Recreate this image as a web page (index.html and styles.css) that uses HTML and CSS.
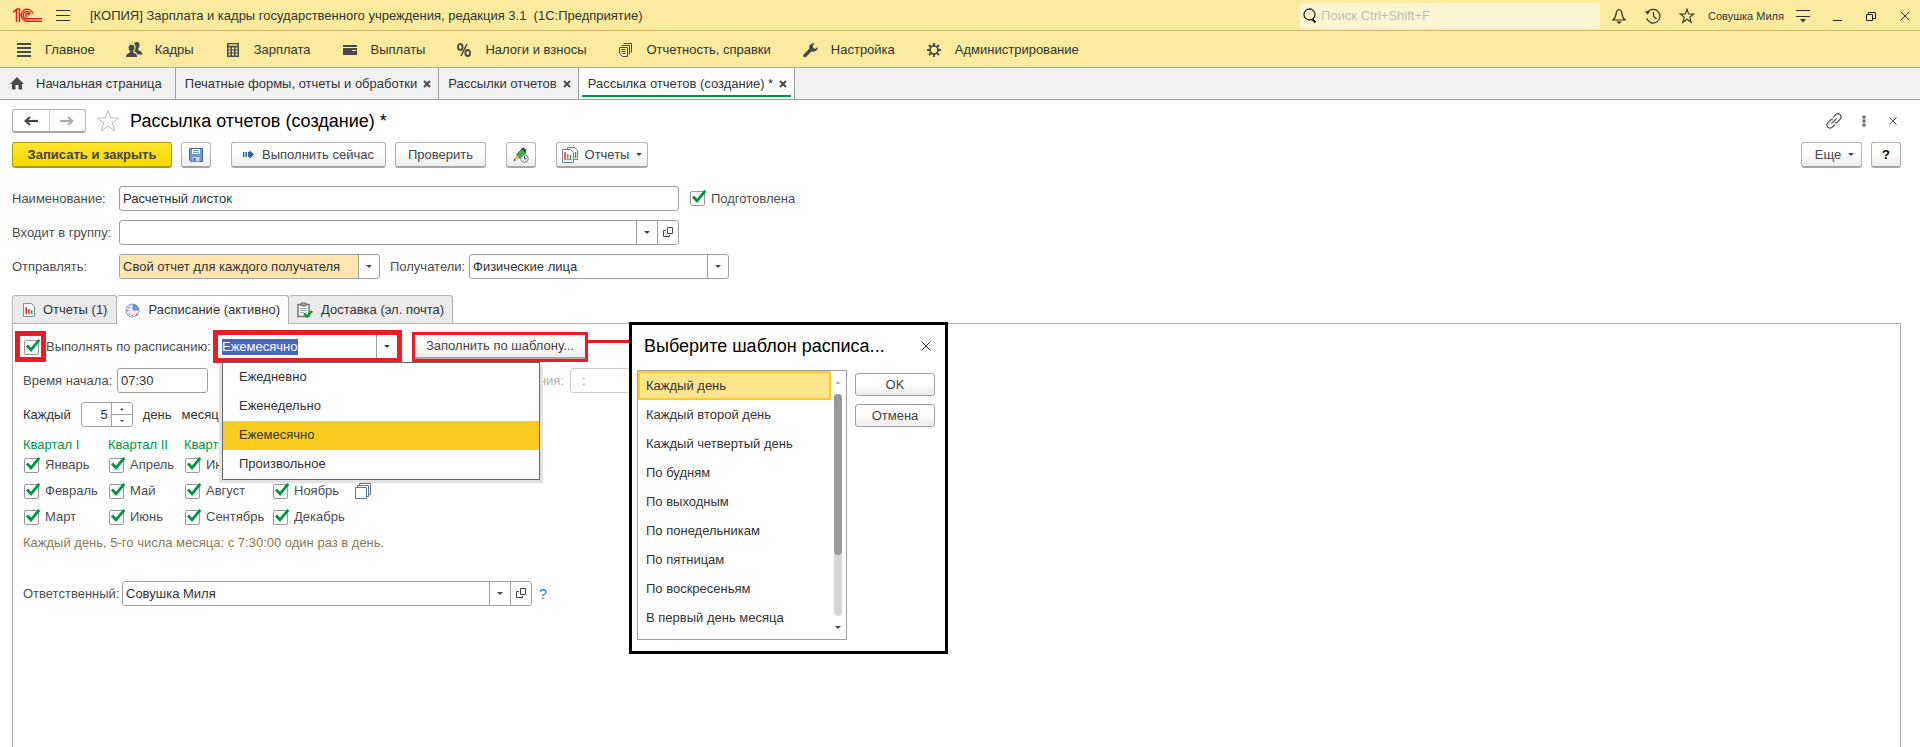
FILE: index.html
```html
<!DOCTYPE html>
<html lang="ru">
<head>
<meta charset="utf-8">
<title>Рассылка отчетов (создание)</title>
<link rel="stylesheet" href="styles.css">
</head>
<body>
<svg class="sprite" width="0" height="0" aria-hidden="true">
  <symbol id="open" viewBox="0 0 11 11"><path d="M4.5 .5h5v6h-5zM3 3.500H.5v6h6V8" fill="none" stroke="#444"/></symbol>
  <symbol id="cross" viewBox="0 0 10 10"><path d="M.5.5l9 9M9.500.5l-9 9" fill="none" stroke="#333"/></symbol>
  <symbol id="xbold" viewBox="0 0 8 8"><path d="M1 1l6 6M7 1L1 7" fill="none" stroke="#4a4a4a" stroke-width="2"/></symbol>
</svg>

<header class="titlebar">
  <svg class="logo" width="30" height="15" viewBox="0 0 30 15" fill="none" stroke="#e02020" stroke-width="1.500"><path d="M0 4.300L3.500 1.500V14M3.200 1h3.200V14"/><path d="M20 5.500A6 6 0 1 0 14.500 13.200H29"/><path d="M17.300 6.500A3.600 3.600 0 1 0 14 10.800H29"/><path d="M15.600 7a1.500 1.500 0 1 0-1.300 1.400"/></svg>
  <button class="ico" aria-label="Меню"><svg width="14" height="12" viewBox="0 0 14 12"><path d="M0 .5h14M0 5.500h14M0 10.500h14" stroke="#333"/></svg></button>
  <h1>[КОПИЯ] Зарплата и кадры государственного учреждения, редакция 3.1&nbsp; (1С:Предприятие)</h1>
  <div class="search">
    <svg width="14" height="16" viewBox="0 0 14 16" fill="none" stroke="#222"><circle cx="6.500" cy="6.500" r="5.500" stroke-width="1.300"/><path d="M9.500 11.500l3 3" stroke-width="2.200"/></svg>
    <input type="search" placeholder="Поиск Ctrl+Shift+F" aria-label="Поиск">
  </div>
  <div class="system">
    <button class="ico" aria-label="Уведомления"><svg width="14" height="16" viewBox="0 0 14 16"><path d="M7 1.500c-2 .6-2.900 2-3 4.500-.1 3-1 4.500-3.200 6h12.400C11 10.500 10.100 9 10 6c-.1-2.500-1-3.900-3-4.500z" fill="none" stroke="#333" stroke-width="1.200"/><path d="M4.500 13.500h5L7.800 15.500H6.200z" fill="#333"/></svg></button>
    <button class="ico" aria-label="История"><svg width="16" height="16" viewBox="0 0 16 16"><path d="M2.500 4.500a6.800 6.800 0 1 1-.8 5.800M8.500 4v4.300l3 2.700" fill="none" stroke="#333" stroke-width="1.200"/><path d="M0 3l5 .2L2.500 6.800z" fill="#333"/></svg></button>
    <button class="ico" aria-label="Избранное"><svg width="16" height="16" viewBox="0 0 16 16"><path d="M8 1.200l1.700 4.700 5 .1-4 3.100 1.500 5.200L8 11.200l-4.200 3.100 1.500-5.200-4-3.100 5-.1z" fill="none" stroke="#333" stroke-width="1.100"/></svg></button>
    <span class="user">Совушка Миля</span>
    <button class="ico" aria-label="Настройки панели"><svg width="14" height="14" viewBox="0 0 14 14"><path d="M0 1.500h14M0 7.500h14" stroke="#333"/><path d="M4 10h6l-3 3.500z" fill="#333"/></svg></button>
    <button class="ico" aria-label="Свернуть"><svg width="10" height="10" viewBox="0 0 10 10"><path d="M1 9.500h9" stroke="#222"/></svg></button>
    <button class="ico" aria-label="Восстановить"><svg width="10" height="10" viewBox="0 0 10 10"><path d="M.5 3.500h6v6h-6zM2.500 3.500v-2h7v6h-3" fill="none" stroke="#222"/></svg></button>
    <button class="ico" aria-label="Закрыть"><svg width="10" height="10"><use href="#cross"/></svg></button>
  </div>
</header>

<nav class="sections">
  <a href="#"><svg width="20" height="16" viewBox="0 0 20 16"><path d="M3 2h14M3 6h14M3 10h14M3 14h14" stroke="#4a4a4a" stroke-width="2"/></svg>Главное</a>
  <a href="#"><svg width="20" height="16" viewBox="0 0 20 16" fill="#4a4a4a"><path d="M12.500 0a3 3 0 0 1 3 3.300c0 1.500-.6 2.500-1.300 3.200v1.500c1.500.9 4.200 1.300 4.200 4.500h-5c-.4-1.700-2-2.500-3-3l.3-1c1.300-2 1.300-5-.6-6.700.4-1.100 1.300-1.800 2.400-1.800z"/><path d="M7.500 2.500c1.900 0 3 1.400 3 3.300 0 1.500-.7 2.700-1.400 3.300v1.300c1.800.8 4 1.500 4 4.600H2c0-3.100 2.200-3.800 4-4.600V9.100c-.8-.6-1.400-1.800-1.400-3.300 0-1.900 1.100-3.300 2.900-3.300z"/></svg>Кадры</a>
  <a href="#"><svg width="20" height="16" viewBox="0 0 20 16"><path d="M4 1h12v14H4z" fill="#4a4a4a"/><path d="M5.500 6.500h9M5.500 9.500h9M5.500 12.500h9" stroke="#fbeb9e" stroke-width="2" stroke-dasharray="2 1.500"/><path d="M5.500 3h9" stroke="#fbeb9e" stroke-width="1.500"/></svg>Зарплата</a>
  <a href="#"><svg width="20" height="16" viewBox="0 0 20 16"><path d="M3 3h14v10H3z" fill="#4a4a4a"/><path d="M3 5.500h14" stroke="#fbeb9e"/><path d="M12 8.500h4" stroke="#fbeb9e"/></svg>Выплаты</a>
  <a href="#"><svg width="20" height="16" viewBox="0 0 20 16" fill="none" stroke="#4a4a4a"><ellipse cx="6.300" cy="5" rx="2.300" ry="3" stroke-width="1.900"/><ellipse cx="13.700" cy="11" rx="2.300" ry="3" stroke-width="1.900"/><path d="M13 2L7 14" stroke-width="1.500"/></svg>Налоги и взносы</a>
  <a href="#"><svg width="20" height="16" viewBox="0 0 20 16" fill="none" stroke="#4a4a4a"><path d="M3.500 5.500h8v9h-5l-3-3zM5.500 3.500h8v9M7.500 1.500h8v9M5.500 7.500h4M5.500 9.500h4M6.500 11.500h3"/></svg>Отчетность, справки</a>
  <a href="#"><svg width="20" height="16" viewBox="0 0 20 16"><path d="M5 13.500l6-6" stroke="#4a4a4a" stroke-width="3.600" stroke-linecap="round"/><path d="M14.500 1.300a4.300 4.300 0 1 0 3.200 3.700l-2.700 2-2.200-1.500.2-2.300z" fill="#4a4a4a"/></svg>Настройка</a>
  <a href="#"><svg width="20" height="16" viewBox="0 0 20 16" fill="none" stroke="#4a4a4a"><circle cx="10" cy="8" r="4" stroke-width="1.700"/><path d="M10 1v3M10 12v3M3 8h3M14 8h3M5 3l2.200 2.200M12.800 10.800L15 13M5 13l2.200-2.200M12.800 5.200L15 3" stroke-width="2"/></svg>Администрирование</a>
</nav>

<nav class="windows">
  <a href="#" class="home"><svg width="14" height="13" viewBox="0 0 14 13"><path d="M7 0l7 7h-2v5.500H8.500V8h-3v4.500H2V7H0z" fill="#4a4a4a"/></svg>Начальная страница</a>
  <a href="#">Печатные формы, отчеты и обработки<svg width="8" height="8"><use href="#xbold"/></svg></a>
  <a href="#">Рассылки отчетов<svg width="8" height="8"><use href="#xbold"/></svg></a>
  <a href="#" class="current">Рассылка отчетов (создание) *<svg width="8" height="8"><use href="#xbold"/></svg></a>
</nav>

<main>
  <div class="heading">
    <div class="history">
      <button aria-label="Назад"><svg width="14" height="10" viewBox="0 0 14 10"><path d="M2 5h12" stroke="#444" stroke-width="2.200"/><path d="M6 1L1.500 5 6 9" fill="none" stroke="#444" stroke-width="2"/></svg></button>
      <button aria-label="Вперед"><svg width="14" height="10" viewBox="0 0 14 10"><path d="M0 5h12" stroke="#aaa" stroke-width="2.200"/><path d="M8 1l4.500 4L8 9" fill="none" stroke="#aaa" stroke-width="2"/></svg></button>
    </div>
    <button class="ico star" aria-label="В избранное"><svg width="24" height="24" viewBox="0 0 24 24"><path d="M12 1.500l2.600 7.500 8 .1-6.300 4.800 2.300 7.800L12 17.200l-6.600 4.500 2.300-7.800L1.400 9.100l8-.1z" fill="none" stroke="#b4bcc4"/></svg></button>
    <h2>Рассылка отчетов (создание) *</h2>
    <div class="tools">
      <button class="ico" aria-label="Ссылка"><svg width="16" height="16" viewBox="0 0 16 16" fill="none" stroke="#555" stroke-width="1.200"><path d="M7 4.500l2.600-2.700a3 3 0 0 1 4.500 4.300L11.500 9a3 3 0 0 1-2.500.8M9 11.500l-2.600 2.700a3 3 0 0 1-4.500-4.300L4.500 7A3 3 0 0 1 7 6.200M5.500 10.500l5-5"/></svg></button>
      <button class="ico" aria-label="Действия"><svg width="4" height="12" viewBox="0 0 4 12"><path d="M.5.5h3v3h-3zM.5 4.500h3v3h-3zM.5 8.500h3v3h-3z" fill="#666"/></svg></button>
      <button class="ico" aria-label="Закрыть форму"><svg width="8" height="8"><use href="#cross"/></svg></button>
    </div>
  </div>

  <div class="toolbar">
    <button class="btn primary">Записать и закрыть</button>
    <button class="btn square" aria-label="Записать"><svg width="14" height="14" viewBox="0 0 14 14"><path d="M.5.5h13v13H2l-1.500-1.500z" fill="#6b9cc9" stroke="#3d6a94"/><path d="M3 1h8v5H3z" fill="#fff"/><path d="M4 2.500h6M4 4.500h6" stroke="#7ea5c8"/><path d="M3.500 9h7v4.500h-7z" fill="#c9d6df"/><path d="M4.500 10h2v3h-2z" fill="#3d6a94"/></svg></button>
    <button class="btn run"><svg width="12" height="10" viewBox="0 0 12 10"><path d="M0 2h1.500v5H0zM2.500 2H4v5H2.500zM5 2h1.500V0L11 4.500 6.500 9V7H5z" fill="#2d6798"/></svg>Выполнить сейчас</button>
    <button class="btn check-btn">Проверить</button>
    <button class="btn square edit" aria-label="Изменить расписание"><svg width="16" height="16" viewBox="0 0 16 16"><path d="M3.500 7.500L9 2l4 3.500-6 6z" fill="#45ad4d" stroke="#27783a"/><path d="M8 2l2-1.700 3.500 2.400-1 3z" fill="#3d4a52"/><path d="M3.200 7.500L1 13.500l5.500-2z" fill="#eeb76d"/><path d="M1.500 11.500l-1 2.500 2.300-.8z" fill="#333"/><circle cx="11.500" cy="11.500" r="3.800" fill="#fff" stroke="#60798f"/><path d="M11.500 9v2.800h2.200" fill="none" stroke="#345"/></svg></button>
    <button class="btn reports"><svg width="16" height="16" viewBox="0 0 16 16"><path d="M5.500.5h7l3 3v9h-10z" fill="#fff" stroke="#6f8496"/><path d="M13.500 5v6" stroke="#2b9f4b" stroke-width="1.500"/><path d="M.5 2.500h8l3 3v10H.5z" fill="#fff" stroke="#6f8496"/><path d="M3 5v7" stroke="#e02b2b" stroke-width="1.500"/><path d="M5.700 7v5" stroke="#e0702b" stroke-width="1.500"/><path d="M8.500 8v4" stroke="#2b9f4b" stroke-width="1.500"/><path d="M2 12.500h8" stroke="#8aa"/></svg>Отчеты<i class="caret"></i></button>
    <button class="btn more">Еще<i class="caret"></i></button>
    <button class="btn square help" aria-label="Справка">?</button>
  </div>

  <div class="fields">
    <label for="name">Наименование:</label>
    <div class="line">
      <input id="name" class="box wide" value="Расчетный листок">
      <label class="tick ready"><input type="checkbox" checked>Подготовлена</label>
    </div>
    <label for="group">Входит в группу:</label>
    <div class="line">
      <div class="combo wide"><input id="group"><button aria-label="Выбрать"><i class="caret"></i></button><button aria-label="Открыть"><svg width="11" height="11"><use href="#open"/></svg></button></div>
    </div>
    <label for="send">Отправлять:</label>
    <div class="line">
      <div class="combo send"><select id="send"><option>Свой отчет для каждого получателя</option></select><span><i class="caret"></i></span></div>
      <label for="rcpt" class="rcpt">Получатели:</label>
      <div class="combo to"><select id="rcpt"><option>Физические лица</option></select><span><i class="caret"></i></span></div>
    </div>
  </div>

  <div class="tabs" role="tablist">
    <button role="tab"><svg width="12" height="14" viewBox="0 0 12 14"><path d="M.5.500h8l3 3v10H.5z" fill="#fff" stroke="#8493a0"/><path d="M3.200 4v7" stroke="#e02b2b" stroke-width="1.600"/><path d="M5.900 6v5" stroke="#c33" stroke-width="1.600"/><path d="M8.700 7v4" stroke="#2b9f4b" stroke-width="1.600"/></svg>Отчеты (1)</button>
    <button role="tab" aria-selected="true"><svg width="15" height="15" viewBox="0 0 15 15"><circle cx="7.500" cy="7.500" r="6.500" fill="#eaf1fa" stroke="#7d9cc4"/><path d="M7.500 7.500V1a6.500 6.500 0 0 1 6.500 6.500z" fill="#6c94cc"/><path d="M2 7.500h1.500M7.500 11.500V13M3.500 4l1 1M11 11l1 1M4 11.500l1-1" stroke="#e05545" stroke-width="1.300"/></svg>Расписание (активно)</button>
    <button role="tab"><svg width="16" height="16" viewBox="0 0 16 16"><path d="M1 2.500h11v12H1z" fill="#fff" stroke="#7a7570" stroke-width="1.500"/><path d="M4 1h5v3H4z" fill="#aaa49c" stroke="#77716a"/><path d="M3 6.500h7M3 8.500h7M3 10.500h4" stroke="#9ab"/><path d="M7 11.500l3 3 5-5.500" fill="none" stroke="#159a3a" stroke-width="2.600"/></svg>Доставка (эл. почта)</button>
  </div>

  <section class="panel">
    <div class="line schedule">
      <span class="mark mark-tick"><input type="checkbox" id="run" checked></span>
      <label for="run">Выполнять по расписанию:</label>
      <div class="mark mark-period">
        <div class="combo period"><input id="period" value="Ежемесячно" role="combobox" aria-expanded="true" aria-label="Периодичность"><button aria-label="Список"><i class="caret"></i></button></div>
        <ul class="dropdown" role="listbox">
          <li role="option">Ежедневно</li>
          <li role="option">Еженедельно</li>
          <li role="option" aria-selected="true">Ежемесячно</li>
          <li role="option">Произвольное</li>
        </ul>
      </div>
      <div class="mark mark-fill"><button class="btn fill">Заполнить по шаблону...</button></div>
    </div>

    <div class="line time">
      <label for="start">Время начала:</label>
      <input id="start" class="box" value="07:30">
      <label for="end" class="off">Время окончания:</label>
      <input id="end" class="box off" value=":" disabled>
    </div>

    <div class="line every">
      <label for="day">Каждый</label>
      <div class="combo spin"><input id="day" value="5"><div><button aria-label="Больше"><i class="up"></i></button><button aria-label="Меньше"><i class="down"></i></button></div></div>
      <span>день</span><span class="month">месяца</span>
    </div>

    <div class="months">
      <h3>Квартал I</h3><h3>Квартал II</h3><h3>Квартал III</h3><h3>Квартал IV</h3><span></span>
      <label class="tick"><input type="checkbox" checked>Январь</label>
      <label class="tick"><input type="checkbox" checked>Апрель</label>
      <label class="tick"><input type="checkbox" checked>Июль</label>
      <label class="tick"><input type="checkbox" checked>Октябрь</label><span></span>
      <label class="tick"><input type="checkbox" checked>Февраль</label>
      <label class="tick"><input type="checkbox" checked>Май</label>
      <label class="tick"><input type="checkbox" checked>Август</label>
      <label class="tick"><input type="checkbox" checked>Ноябрь</label>
      <button class="ico" aria-label="Отметить все"><svg width="16" height="16" viewBox="0 0 16 16" stroke="#5f7486" fill="#fff"><path d="M4.500 .5h11v11h-11z"/><path d="M2.500 2.500h11v11h-11z"/><path d="M.5 4.500h11v11H.5z"/></svg></button>
      <label class="tick"><input type="checkbox" checked>Март</label>
      <label class="tick"><input type="checkbox" checked>Июнь</label>
      <label class="tick"><input type="checkbox" checked>Сентябрь</label>
      <label class="tick"><input type="checkbox" checked>Декабрь</label><span></span>
    </div>

    <p class="summary">Каждый день, 5-го числа месяца; с 7:30:00 один раз в день.</p>

    <div class="line owner">
      <label for="owner">Ответственный:</label>
      <div class="combo"><input id="owner" value="Совушка Миля"><button aria-label="Выбрать"><i class="caret"></i></button><button aria-label="Открыть"><svg width="11" height="11"><use href="#open"/></svg></button></div>
      <a href="#">?</a>
    </div>

    <div class="connector"></div>
    <div class="dialog" role="dialog" aria-labelledby="dlg">
      <div class="dialog-head"><h2 id="dlg">Выберите шаблон расписа...</h2><button class="ico" aria-label="Закрыть окно"><svg width="10" height="10"><use href="#cross"/></svg></button></div>
      <div class="dialog-body">
        <div class="list">
          <ul role="listbox">
            <li role="option" aria-selected="true">Каждый день</li>
            <li role="option">Каждый второй день</li>
            <li role="option">Каждый четвертый день</li>
            <li role="option">По будням</li>
            <li role="option">По выходным</li>
            <li role="option">По понедельникам</li>
            <li role="option">По пятницам</li>
            <li role="option">По воскресеньям</li>
            <li role="option">В первый день месяца</li>
          </ul>
          <div class="scroll"><i class="caret up-arrow"></i><div class="track"><div class="thumb"></div></div><i class="caret"></i></div>
        </div>
        <div class="actions"><button class="btn">OK</button><button class="btn">Отмена</button></div>
      </div>
    </div>
  </section>
</main>
<script>
  var period = document.getElementById('period');
  period.focus();
  period.select();
</script>
</body>
</html>
```
FILE: styles.css
```css
* { box-sizing: border-box; }
body {
  margin: 0;
  min-height: 100vh;
  display: flex;
  flex-direction: column;
  overflow: hidden;
  background: #fff;
  color: #4d4d4d;
  font: 13px/16px "Liberation Sans", Arial, sans-serif;
}
h1, h2, h3, p, ul { margin: 0; padding: 0; font-weight: normal; list-style: none; }
h1 { font-size: 13px; }
input, select, button { font: inherit; color: inherit; margin: 0; }
button { padding: 0; }
svg { display: block; flex: none; }
a { color: inherit; text-decoration: none; }
.sprite { position: absolute; }
.line { display: flex; align-items: center; }
.ico { display: flex; align-items: center; justify-content: center; border: 0; background: none; }

.titlebar {
  display: flex;
  align-items: center;
  height: 31px;
  padding: 1px 0 0 13px;
  background: #fbeb9e;
  border-bottom: 1px solid #c9b964;
  color: #333;
}
.titlebar > .ico { margin: 0 20px 0 13px; }
.search {
  display: flex;
  align-items: center;
  gap: 4px;
  width: 300px;
  height: 26px;
  margin-left: auto;
  padding-left: 3px;
  border-radius: 3px;
  background: #fdf5d4;
}
.search input { flex: 1; min-width: 0; padding: 0; border: 0; background: none; outline: 0; }
.search input::placeholder { color: #bdbdbd; opacity: 1; }
.system { display: flex; align-items: center; margin-right: -2px; }
.system .ico { width: 34px; height: 30px; }
.system .ico:first-child { margin-left: 2px; }
.user { width: 82px; padding-left: 4px; font-size: 11px; white-space: nowrap; }

.sections {
  display: flex;
  align-items: center;
  gap: 29px;
  height: 37px;
  padding: 1px 14px 0;
  background: #fbeb9e;
  border-bottom: 1px solid #bfae5a;
  color: #333;
}
.sections a { display: flex; align-items: center; gap: 11px; }

.windows { display: flex; height: 32px; background: #f1f1f1; border-bottom: 1px solid #a0a0a0; color: #333; }
.windows a { display: flex; align-items: center; gap: 6px; padding: 0 7px 0 9px; border-right: 1px solid #a0a0a0; }
.windows .home { gap: 12px; padding: 0 13px 0 10px; }
.windows .current { position: relative; background: #fff; }
.windows .current::after { content: ""; position: absolute; left: 3px; right: 3px; bottom: 2px; height: 2px; background: #009646; }

main { flex: 1; display: flex; flex-direction: column; padding: 8px 19px 0 12px; }
.heading { display: flex; align-items: center; height: 26px; }
.heading h2 { font-size: 18px; line-height: 24px; color: #000; }
.history { display: flex; width: 74px; height: 24px; border: 1px solid #b3b3b3; border-bottom: 2px solid #a6a6a6; border-radius: 3px; }
.history button { flex: 1; display: flex; align-items: center; justify-content: center; border: 0; background: none; }
.history button + button { border-left: 1px solid #ccc; }
.star { margin: 0 10px; }
.tools { display: flex; align-items: center; margin-left: auto; }
.tools .ico { width: 30px; height: 24px; }
.tools .ico:last-child { width: 28px; margin-right: -6px; }

.toolbar { display: flex; align-items: center; margin-top: 8px; }
.btn {
  display: flex;
  align-items: center;
  justify-content: center;
  height: 26px;
  border: 1px solid #b3b3b3;
  border-bottom: 2px solid #a6a6a6;
  border-radius: 3px;
  background: linear-gradient(#fff 40%, #ededed);
  color: #444;
}
.primary { width: 160px; border-color: #b39e00; background: linear-gradient(#ffe72e, #f5d800); font-weight: bold; }
.square { width: 30px; margin-left: 9px; }
.run { width: 155px; gap: 7px; margin-left: 20px; }
.check-btn { width: 91px; margin-left: 9px; }
.edit { margin-left: 20px; }
.reports { width: 92px; gap: 7px; margin-left: 20px; }
.more { width: 61px; gap: 7px; padding-left: 6px; margin-left: auto; }
.help { color: #000; font-weight: bold; }
.caret { width: 0; height: 0; border: 3px solid transparent; border-top-color: #444; border-bottom: 0; }

.fields { display: grid; grid-template-columns: 107px 1fr; row-gap: 9px; align-items: center; margin-top: 18px; }
.box, .combo { height: 25px; border: 1px solid #a0a0a0; border-radius: 3px; background: #fff; color: #333; }
.box { padding: 0 3px; outline: 0; }
.combo { display: flex; }
.combo input, .combo select { flex: 1; min-width: 0; padding: 0 3px; border: 0; border-radius: 3px; background: none; outline: 0; appearance: none; }
.combo > button, .combo > span { display: flex; align-items: center; justify-content: center; width: 21px; border: 0; border-left: 1px solid #a0a0a0; background: none; }
.wide { width: 560px; }
.send { width: 261px; }
.send select { background: #ffe6b0; border-radius: 2px 0 0 2px; }
.to { width: 260px; }
.rcpt { width: 79px; margin-left: 10px; }
.tick { display: flex; align-items: center; gap: 4px; white-space: nowrap; }
.ready { margin-left: 11px; }
input[type="checkbox"] {
  appearance: none;
  flex: none;
  width: 17px;
  height: 17px;
  background: url("data:image/svg+xml,%3Csvg xmlns='http://www.w3.org/2000/svg' width='17' height='17'%3E%3Crect x='.5' y='1.5' width='14' height='14' rx='1.500' fill='%23fff' stroke='%23999'/%3E%3Cpath d='M3 6.500L7 10.800 15.300 .8' fill='none' stroke='%23009646' stroke-width='2.800'/%3E%3C/svg%3E") no-repeat;
}

.tabs { display: flex; margin-top: 16px; }
.tabs button { display: flex; align-items: center; gap: 8px; height: 28px; padding: 0 9px 0 10px; border: 1px solid #b3b3b3; border-bottom: 0; border-radius: 3px 3px 0 0; background: #ebebeb; color: #333; }
.tabs button + button { padding: 0 8px; border-left: 0; }
.tabs [aria-selected="true"] { position: relative; z-index: 1; height: 29px; margin-bottom: -1px; background: #fff; }

.panel { position: relative; flex: 1; padding: 10px; border: 1px solid #b3b3b3; border-bottom: 0; }
.mark { border: 5px solid #ed1c24; }
.mark-tick { flex: none; margin-left: -8px; padding: 3px 0 1px 4px; }
.mark-tick input { display: block; }
.mark-period { position: relative; }
.mark-fill { margin-left: 10px; border-width: 3px; }
.schedule { height: 25px; }
.schedule label { width: 167px; white-space: nowrap; }
.period { width: 179px; height: 23px; border: 0; padding-left: 1px; }
.period input::selection { background: #4a67c0; color: #fff; }
.fill { width: 170px; height: 24px; border: 0; border-bottom: 2px solid #a6a6a6; border-radius: 0; }
.dropdown {
  position: absolute;
  z-index: 2;
  top: calc(100% + 4px);
  left: 4px;
  width: 318px;
  border: 1px solid #666;
  background: #fff;
  box-shadow: -3px 3px #e3e3e3, 3px 3px #e3e3e3;
  color: #333;
}
.dropdown li { height: 29px; padding: 6px 16px; }
.dropdown [aria-selected="true"] { background: #facc22; }

.time { width: 638px; margin-top: 9px; }
.time label { width: 94px; }
.time .box { width: 91px; }
.time label.off { width: auto; margin: 0 6px 0 auto; color: #b0b0b0; }
.time .box.off { padding-left: 11px; border-color: #ccc; color: #999; }
.every { margin-top: 9px; gap: 10px; color: #333; }
.spin { width: 52px; }
.spin input { text-align: right; }
.spin > div { display: flex; flex-direction: column; width: 21px; border-left: 1px solid #a0a0a0; }
.spin button { flex: 1; display: flex; align-items: center; justify-content: center; border: 0; background: none; }
.spin button + button { border-top: 1px solid #a0a0a0; }
.up, .down { border: 2px solid transparent; }
.up { border-bottom-color: #444; border-top: 0; }
.down { border-top-color: #444; border-bottom: 0; }
.months { display: grid; grid-template-columns: 85px 76px 88px 82px 16px; grid-template-rows: 14px repeat(3, 26px); align-items: center; margin-top: 11px; padding-left: 1px; }
.months h3 { margin-left: -1px; font-size: 13px; color: #009646; white-space: nowrap; }
.summary { margin-top: 5px; color: #857a58; }
.owner { margin-top: 30px; }
.owner label { width: 99px; }
.owner .combo { width: 410px; }
.owner a { margin-left: 7px; color: #1c7fc4; font-size: 14px; }

.connector { position: absolute; top: 16px; left: 575px; width: 42px; height: 3px; background: #ed1c24; }
.dialog { position: absolute; z-index: 3; top: -2px; left: 616px; width: 319px; border: 3px solid #000; background: #fff; padding: 0 10px 11px 5px; }
.dialog-head { display: flex; align-items: center; justify-content: space-between; height: 45px; padding: 0 4px 4px 7px; }
.dialog-head h2 { font-size: 18px; line-height: 24px; color: #000; }
.dialog-body { display: flex; justify-content: space-between; }
.list { display: flex; width: 210px; height: 270px; border: 1px solid #a0a0a0; color: #333; }
.list ul { flex: 1; }
.list li { height: 29px; padding: 7px 8px 6px; white-space: nowrap; }
.list [aria-selected="true"] { padding: 5px 6px; border: 2px solid #facc22; background: #fee48c; }
.scroll { display: flex; flex-direction: column; align-items: center; width: 15px; padding: 10px 1px 10px 0; }
.up-arrow { transform: rotate(180deg); opacity: 0.4; }
.track { flex: 1; width: 8px; margin: 10px 0; border-radius: 4px; background: #d6d6d6; }
.thumb { height: 161px; border-radius: 4px; background: #999; }
.actions { display: flex; flex-direction: column; gap: 8px; width: 80px; padding-top: 3px; }
.actions .btn { height: 23px; border: 1px solid #a0a0a0; }
```
